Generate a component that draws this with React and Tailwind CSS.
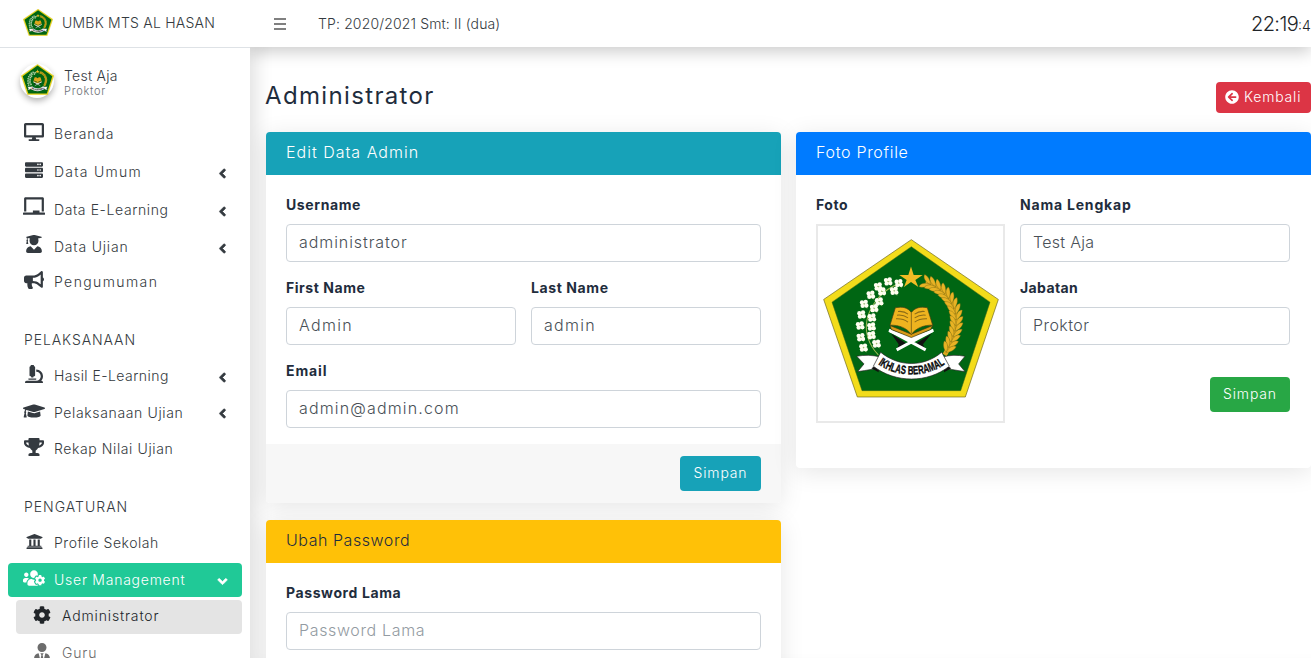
import React from "react";
import {
  FaDesktop, FaServer, FaChalkboard, FaUserGraduate, FaBullhorn, FaMicroscope,
  FaGraduationCap, FaTrophy, FaUniversity, FaUsersCog, FaCog, FaUserTie,
  FaArrowCircleLeft, FaAngleLeft, FaAngleDown,
} from "react-icons/fa";

const FLOWERS = [
  [202, 215], [232, 200], [264, 205], [180, 240], [213, 230], [250, 228], [160, 267],
  [205, 260], [152, 299], [190, 280], [148, 332], [183, 308], [150, 367], [182, 335],
  [158, 398], [182, 361], [197, 386],
];

// x, y and heading of each pair of wheat leaves, from the star down to the ribbon
const GRAINS = [
  [352, 206, 25], [368, 212, 30], [383, 221, 38], [397, 232, 46], [409, 245, 54],
  [419, 259, 62], [427, 274, 70], [433, 290, 78], [436, 307, 86], [436, 324, 94],
  [434, 341, 100], [430, 358, 106], [424, 374, 110], [417, 390, 114], [410, 405, 116],
];

function Emblem({ id, className }) {
  return (
    <svg viewBox="37 73 528 476" className={className} preserveAspectRatio="none">
      <polygon points="302,75 563,254 464,546 140,546 39,254" fill="#f3dc1b" stroke="#6b651c" strokeWidth="2" />
      <polygon points="302,96 538,262 450,527 154,527 64,262" fill="#006613" stroke="#40651a" strokeWidth="1.5" />
      <polygon points="301,155 309,181 336,181 314,196 323,217 301,202 280,217 288,196 266,181 293,181" fill="#f2bc25" />
      <path d="M266 206C220 222 180 265 169 315C162 352 175 390 203 420" fill="none" stroke="#9dbb55" strokeWidth="3" />
      {FLOWERS.map(([x, y]) => (
        <g key={`${x}-${y}`} transform={`translate(${x} ${y})`}>
          <path d="M0 0L9 14" stroke="#9dbb55" strokeWidth="2" />
          <circle cx="-6" cy="-4" r="6.5" fill="#fffef0" />
          <circle cx="5" cy="-6" r="6.5" fill="#fffef0" />
          <circle cx="7" cy="5" r="6.5" fill="#fffef0" />
          <circle cx="-4" cy="6" r="6.5" fill="#fffef0" />
          <circle r="1.8" fill="#b3c66c" />
        </g>
      ))}
      <path d="M345 203C405 214 438 268 436 325C434 360 420 392 402 420" fill="none" stroke="#d9a51c" strokeWidth="14" />
      {GRAINS.map(([x, y, a]) => (
        <g key={`${x}-${y}`} transform={`translate(${x} ${y}) rotate(${a})`} fill="#e8b324" stroke="#6f6414" strokeWidth="1">
          <path d="M8 0C4 -9 -6 -19 -20 -20C-22 -10 -10 0 8 0Z" />
          <path d="M8 0C4 9 -6 19 -20 20C-22 10 -10 0 8 0Z" />
        </g>
      ))}
      <path d="M241 356L264 388L259 407L286 385ZM363 356L337 388L345 407L317 385Z" fill="#111" />
      <path d="M235 346L345 405M368 346L258 405" stroke="#fff" strokeWidth="9" />
      <path d="M236 343L301 366L368 343L366 352L301 379L236 352Z" fill="#fff" />
      <path d="M238 332L302 358L366 332L360 344L302 368L242 344Z" fill="#d99a18" stroke="#3d3512" strokeWidth="2" />
      <path d="M254 279C276 274 292 279 302 293C312 279 330 274 350 279L366 331C340 330 315 340 302 359C290 340 265 330 238 331Z" fill="#efb41f" stroke="#4a3d12" strokeWidth="2" />
      <path d="M302 293V356M262 290Q280 288 292 298M259 301Q278 299 292 309M256 312Q278 311 292 322M342 290Q325 288 312 298M345 301Q327 299 312 309M349 312Q327 311 312 322" fill="none" stroke="#8c6c17" strokeWidth="3" />
      <path d="M138 424C160 420 185 420 208 426L214 462C195 460 170 466 141 470L160 447Z" fill="#fff" stroke="#222" strokeWidth="2" />
      <path d="M463 424C440 420 420 420 396 426L390 462C409 460 434 466 463 470L444 447Z" fill="#fff" stroke="#222" strokeWidth="2" />
      <path d="M182 460L204 447L204 472ZM422 460L400 447L400 472Z" fill="#111" />
      <path d="M210 412C265 457 340 457 393 412L416 454C350 505 255 505 188 454Z" fill="#fff" stroke="#222" strokeWidth="2" />
      <path id={id} d="M198 445C257 490 348 490 407 445" fill="none" />
      <text fill="#0a0a0a" stroke="#0a0a0a" strokeWidth="1" className="font-['Liberation_Sans_Narrow','Liberation_Sans',sans-serif] text-[36px] font-bold">
        <textPath href={`#${id}`} startOffset="5" textLength="214" lengthAdjust="spacingAndGlyphs">IKHLAS BERAMAL</textPath>
      </text>
    </svg>
  );
}

function NavItem({ icon: Icon, label, row, track, iconClass = "size-5", arrow }) {
  return (
    <a className={`flex items-center pl-6 pr-4 ${row}`}>
      <span className="flex w-5 shrink-0 justify-center"><Icon className={`shrink-0 -translate-y-0.5 ${iconClass}`} /></span>
      <span className={`ml-2.5 grow whitespace-nowrap ${track}`}>{label}</span>
      {arrow && <FaAngleLeft className="mr-1 size-[15px] translate-y-px stroke-[20] stroke-current" />}
    </a>
  );
}

function Field({ label, value, track, labelTrack, placeholder, className = "" }) {
  return (
    <div className={`flex flex-col ${className}`}>
      <label className={`mb-[9px] h-5 text-sm leading-5 font-bold text-[#1f2d3d] ${labelTrack}`}>{label}</label>
      <div className={`flex h-[38px] items-center rounded border border-[#ced4da] bg-white px-3 pb-0.5 text-base ${placeholder ? "text-[#939ba2]" : "text-[#495057]"}`}>
        <span className={`whitespace-nowrap ${track}`}>{value}</span>
      </div>
    </div>
  );
}

function Card({ title, head, children, className = "" }) {
  return (
    <section className={`rounded bg-white shadow-[0_4px_25px_rgba(0,0,0,0.1)] ${className}`}>
      <h2 className={`flex h-[43px] items-center rounded-t px-5 pb-[3px] text-base font-light ${head}`}>{title}</h2>
      {children}
    </section>
  );
}

export default function App() {
  return (
    <div className="flex h-[658px] w-[1311px] overflow-hidden bg-white font-[Inter,sans-serif] text-sm font-light text-[#343a40]">
      <aside className="relative z-20 h-full w-[250px] shrink-0 overflow-hidden bg-white">
        <div className="flex h-12 items-center border-b border-[#dee2e6] pb-0.5 pl-[23px]">
          <Emblem id="brand-ribbon" className="h-[27px] w-[30px]" />
          <span className="ml-[9px] whitespace-nowrap tracking-[0.22px] text-[#343a40]">UMBK MTS AL HASAN</span>
        </div>
        <div className="flex h-[67px] items-start pt-4 pl-5">
          <div className="flex size-[34px] justify-center rounded-full bg-white shadow-[0_3px_6px_rgba(0,0,0,0.3)]">
            <Emblem id="user-ribbon" className="h-[31px] w-[33px]" />
          </div>
          <div className="ml-2.5 flex flex-col pt-1">
            <span className="leading-4 tracking-[0.25px]">Test Aja</span>
            <span className="text-[11px] leading-[14px] tracking-[0.75px] text-[#6c7075]">Proktor</span>
          </div>
        </div>
        <nav className="flex flex-col">
          <NavItem icon={FaDesktop} label="Beranda" row="h-[38px]" track="tracking-[0.85px]" />
          <NavItem icon={FaServer} label="Data Umum" row="h-[38px]" track="tracking-[1.25px]" iconClass="size-[18px]" arrow />
          <NavItem icon={FaChalkboard} label="Data E-Learning" row="h-[38px]" track="tracking-[0.6px]" iconClass="h-5 w-[22px] -mt-1" arrow />
          <NavItem icon={FaUserGraduate} label="Data Ujian" row="h-9" track="tracking-[0.8px]" iconClass="size-[18px] -mt-0.5" arrow />
          <NavItem icon={FaBullhorn} label="Pengumuman" row="h-[35px] pb-px" track="tracking-[1.4px]" />
          <h3 className="mt-[22px] flex h-9 items-center pl-6 tracking-[0.9px]">PELAKSANAAN</h3>
          <NavItem icon={FaMicroscope} label="Hasil E-Learning" row="h-9" track="tracking-[0.45px]" iconClass="size-[18px]" arrow />
          <NavItem icon={FaGraduationCap} label="Pelaksanaan Ujian" row="h-[37px]" track="tracking-[0.63px]" iconClass="size-[22px]" arrow />
          <NavItem icon={FaTrophy} label="Rekap Nilai Ujian" row="h-9" track="tracking-[0.6px]" />
          <h3 className="mt-[22px] flex h-9 items-center pl-6 tracking-[1px]">PENGATURAN</h3>
          <NavItem icon={FaUniversity} label="Profile Sekolah" row="h-9" track="tracking-[0.53px]" iconClass="size-[17px]" />
          <a className="mx-2 mt-0.5 flex h-[34px] items-center rounded bg-[#20c997] pr-3 pl-4 text-white">
            <span className="flex w-5 justify-center"><FaUsersCog className="size-[22px] shrink-0 -translate-y-0.5" /></span>
            <span className="ml-2.5 grow tracking-[0.75px]">User Management</span>
            <FaAngleDown className="size-[15px] translate-y-px stroke-[20] stroke-current" />
          </a>
          <a className="mt-[3px] mr-2 ml-4 flex h-[34px] items-center rounded bg-[#e4e4e4] pb-0.5 pl-4 text-[#212529]">
            <span className="flex w-5 justify-center"><FaCog className="size-[18px] -translate-y-px" /></span>
            <span className="ml-2.5 tracking-[0.85px]">Administrator</span>
          </a>
          <a className="mt-px mr-2 ml-4 flex h-9 items-center pl-4 text-[#6c6c6c]">
            <span className="flex w-5 justify-center"><FaUserTie className="size-[18px] -translate-y-px" /></span>
            <span className="ml-2.5 tracking-[0.85px]">Guru</span>
          </a>
        </nav>
      </aside>

      <div className="z-10 flex h-full w-[1061px] flex-col shadow-[inset_18px_0_18px_-12px_rgba(0,0,0,0.12)]">
        <header className="flex h-[47px] shrink-0 items-center bg-white pl-6 shadow-[0_5px_15px_rgba(0,0,0,0.2)]">
          <svg viewBox="0 0 12 12" className="h-3 w-3 text-[#808080]" fill="currentColor">
            <path d="M0 0h12v2H0zM0 5h12v2H0zM0 10h12v2H0z" />
          </svg>
          <span className="ml-8 grow tracking-[0.14px] text-[#343a40]">TP: 2020/2021 Smt: II (dua)</span>
          <div className="flex w-[60px] items-baseline overflow-hidden whitespace-nowrap text-[#212529]">
            <span className="text-xl tracking-[-0.6px]">22:19</span>
            <span className="text-sm">:49</span>
          </div>
        </header>
        <main className="flex flex-col pl-4">
          <div className="flex h-[85px] items-center justify-between pt-[14px]">
            <h1 className="-ml-px pb-0.5 text-2xl font-normal tracking-[1.35px] text-[#1f2d3d]">Administrator</h1>
            <button className="mt-0.5 flex h-[31px] w-[95px] items-center rounded bg-[#dc3545] pb-px pl-[9px] text-sm text-white">
              <FaArrowCircleLeft className="mr-[5px] size-3.5" />
              <span className="tracking-[0.8px]">Kembali</span>
            </button>
          </div>
          <div className="flex items-start gap-[15px]">
            <div className="flex w-[515px] flex-col gap-[17px]">
              <Card title={<span className="tracking-[1px]">Edit Data Admin</span>} head="bg-[#17a2b8] text-white" className="h-[371px]">
                <div className="flex h-[269px] flex-col gap-4 px-5 pt-5">
                  <Field label="Username" value="administrator" track="tracking-[0.92px]" labelTrack="tracking-[0.6px]" />
                  <div className="grid grid-cols-2 gap-[15px]">
                    <Field label="First Name" value="Admin" track="tracking-[1.3px]" labelTrack="tracking-[0.55px]" />
                    <Field label="Last Name" value="admin" track="tracking-[1.3px]" labelTrack="tracking-[0.6px]" />
                  </div>
                  <Field label="Email" value="admin@admin.com" track="tracking-[1.15px]" labelTrack="tracking-[0.9px]" />
                </div>
                <footer className="flex h-[59px] justify-end rounded-b bg-[#f7f7f7] pt-3 pr-5">
                  <button className="h-[35px] w-[81px] rounded bg-[#17a2b8] pb-0.5 text-sm tracking-[0.85px] text-white">Simpan</button>
                </footer>
              </Card>
              <Card title={<span className="tracking-[0.55px]">Ubah Password</span>} head="bg-[#ffc107] text-[#1f2d3d]" className="h-[371px]">
                <div className="px-5 pt-5">
                  <Field label="Password Lama" value="Password Lama" track="tracking-[0.65px]" labelTrack="tracking-[0.6px]" placeholder />
                </div>
              </Card>
            </div>
            <Card title={<span className="tracking-[0.7px]">Foto Profile</span>} head="bg-[#007bff] text-white" className="h-[336px] w-[515px]">
              <div className="flex px-5 pt-5">
                <div className="w-[204px]">
                  <h3 className="mb-[9px] h-5 text-sm leading-5 font-bold tracking-[0.5px] text-[#1f2d3d]">Foto</h3>
                  <div className="flex h-[199px] w-[189px] justify-center border-2 border-[#e9e9e9] pt-[13px]">
                    <Emblem id="photo-ribbon" className="h-[159px] w-[176px]" />
                  </div>
                </div>
                <div className="flex w-[270px] flex-col gap-4">
                  <Field label="Nama Lengkap" value="Test Aja" track="tracking-[0.3px]" labelTrack="tracking-[0.8px]" />
                  <Field label="Jabatan" value="Proktor" track="tracking-[0.45px]" labelTrack="tracking-[0.4px]" />
                  <button className="mt-4 h-[35px] w-20 self-end rounded bg-[#28a745] pb-0.5 text-sm tracking-[0.85px] text-white">Simpan</button>
                </div>
              </div>
            </Card>
          </div>
        </main>
      </div>
    </div>
  );
}
